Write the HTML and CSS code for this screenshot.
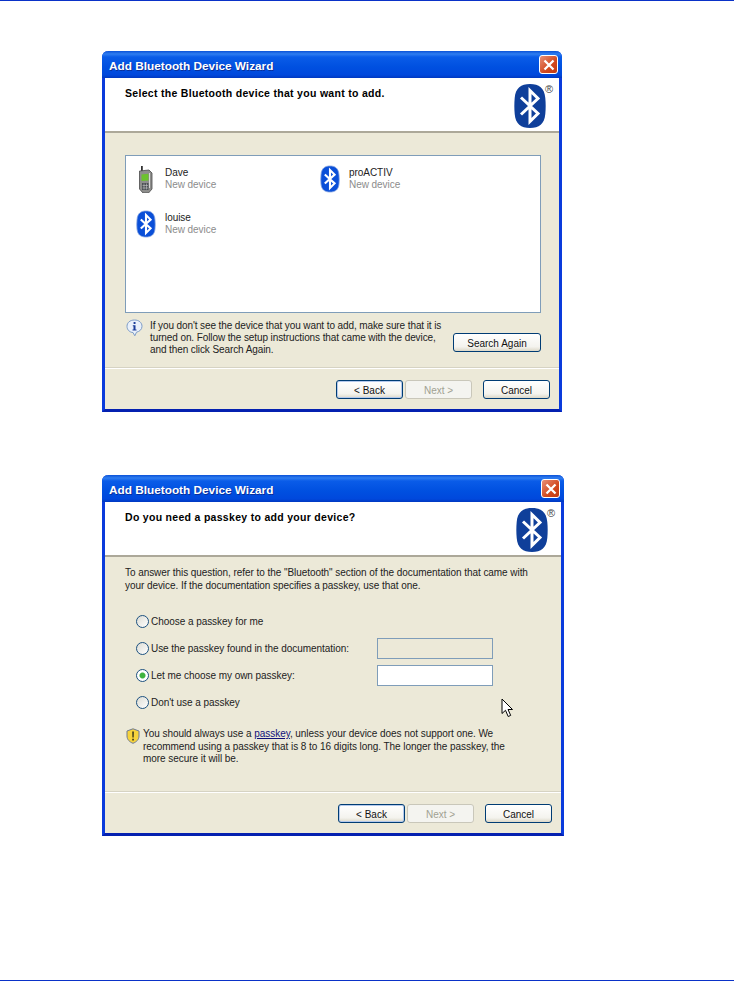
FILE: index.html
```html
<!DOCTYPE html>
<html lang="en">
  <head>
    <meta charset="UTF-8" />
    <meta name="viewport" content="width=device-width, initial-scale=1.0" />
    <title>Add Bluetooth Device Wizard</title>
    <link rel="stylesheet" href="styles.css">
  </head>
  <body>
    <svg class="defs" width="0" height="0">
      <symbol id="bt-small" viewBox="0 0 20 28">
        <path d="M10 1C5 1 1.500 3 1 10C.7 13 .7 16 1 19C1.600 25 5 27 10 27C15 27 18.400 25 19 19C19.300 16 19.300 13 19 10C18.500 3 15 1 10 1Z" fill="#0a4fd8" stroke="#7fa0e0" stroke-width=".8"/>
        <path d="M4.800 9.500L14.600 18.400L10 23V5L14.600 9.600L4.800 18.500" fill="none" stroke="#fff" stroke-width="2.100"/>
      </symbol>
      <symbol id="bt-large" viewBox="0 0 32 44">
        <path d="M16 0C7 0 1.500 4 .7 14C.2 19 .2 25 .7 30C1.500 40 7 44 16 44C25 44 30.500 40 31.300 30C31.800 25 31.800 19 31.300 14C30.500 4 25 0 16 0Z" fill="#0f3f9a"/>
        <path d="M7 13.500L24 29.500L16 37.500V6.500L24 14.500L7 30.500" fill="none" stroke="#fff" stroke-width="3"/>
      </symbol>
    </svg>

    <div class="page">
      <div class="dialog dialog-first">
        <div class="titlebar">
          <span class="title-text">Add Bluetooth Device Wizard</span>
          <button class="close-btn" type="button">
            <svg width="12" height="12" viewBox="0 0 12 12"><path d="M1.500 1.500L10.500 10.500M10.500 1.500L1.500 10.500" stroke="#fff" stroke-width="2.300"/></svg>
          </button>
        </div>
        <div class="wizard-head">
          <h2>Select the Bluetooth device that you want to add.</h2>
          <div class="logo">
            <svg width="32" height="44"><use href="#bt-large"/></svg>
            <span class="reg">®</span>
          </div>
        </div>
        <div class="wizard-body">
          <div class="device-list">
            <div class="device">
              <svg class="device-icon" width="20" height="28" viewBox="0 0 20 28">
                <path d="M5 1h1.800v5H5z" fill="#333"/>
                <path d="M3.500 6L13 5L16 8V24L12.500 28H7L3.500 24Z" fill="#8e8e8c" stroke="#4a4a4a" stroke-width=".8"/>
                <path d="M5.500 9.500L12.500 8.800V15.500L5.500 16Z" fill="#6cc22e"/>
                <path d="M6 18h6.500v7H6z" fill="#4c5054"/>
                <path d="M8 18.500v6M10.500 18.500v6M6.500 20.500h5.500M6.500 23h5.500" stroke="#c4c4c4" stroke-width=".6"/>
                <path d="M13.500 8v15" stroke="#d8d8d8"/>
              </svg>
              <div class="device-text"><div>Dave</div><div class="device-status">New device</div></div>
            </div>
            <div class="device">
              <svg class="device-icon" width="20" height="28"><use href="#bt-small"/></svg>
              <div class="device-text"><div>proACTIV</div><div class="device-status">New device</div></div>
            </div>
            <div class="device">
              <svg class="device-icon" width="20" height="28"><use href="#bt-small"/></svg>
              <div class="device-text"><div>louise</div><div class="device-status">New device</div></div>
            </div>
          </div>
          <div class="hint">
            <svg class="info-icon" width="17" height="18" viewBox="0 0 17 18">
              <path d="M8.500 1C4 1 1 3.700 1 7.300C1 11 4 13.500 7 13.500L8.800 16.800L10.500 13.200C13.500 12.500 16 10.500 16 7.300C16 3.700 13 1 8.500 1Z" fill="#eaf1fb" stroke="#7d9cc8"/>
              <path d="M7.600 3h1.900v1.900H7.600zM6.800 6.200h2.700v4.300h1v1H6.500v-1h1v-3.300h-.7z" fill="#1d3f9a"/>
            </svg>
            <p class="hint-text">If you don't see the device that you want to add, make sure that it is<br>turned on. Follow the setup instructions that came with the device,<br>and then click Search Again.</p>
            <button class="xp-btn search-btn" type="button">Search Again</button>
          </div>
        </div>
        <div class="wizard-foot">
          <button class="xp-btn btn-default" type="button">&lt; Back</button>
          <button class="xp-btn" type="button" disabled>Next &gt;</button>
          <button class="xp-btn btn-cancel" type="button">Cancel</button>
        </div>
      </div>

      <div class="dialog dialog-second">
        <div class="titlebar">
          <span class="title-text">Add Bluetooth Device Wizard</span>
          <button class="close-btn" type="button">
            <svg width="12" height="12" viewBox="0 0 12 12"><path d="M1.500 1.500L10.500 10.500M10.500 1.500L1.500 10.500" stroke="#fff" stroke-width="2.300"/></svg>
          </button>
        </div>
        <div class="wizard-head">
          <h2>Do you need a passkey to add your device?</h2>
          <div class="logo">
            <svg width="32" height="44"><use href="#bt-large"/></svg>
            <span class="reg">®</span>
          </div>
        </div>
        <div class="wizard-body passkey-body">
          <p class="intro">To answer this question, refer to the "Bluetooth" section of the documentation that came with<br>your device. If the documentation specifies a passkey, use that one.</p>
          <div class="options">
            <label class="option"><input type="radio" name="pk" />Choose a passkey for me</label>
            <label class="option"><input type="radio" name="pk" /><span class="option-label">Use the passkey found in the documentation:</span><span class="field field-off"></span></label>
            <label class="option"><input type="radio" name="pk" checked /><span class="option-label">Let me choose my own passkey:</span><span class="field"></span></label>
            <label class="option"><input type="radio" name="pk" />Don't use a passkey</label>
          </div>
          <div class="warning">
            <svg class="shield-icon" width="14" height="16" viewBox="0 0 14 16">
              <path d="M7 .8L13 3V8C13 11.500 10.500 14 7 15.300C3.500 14 1 11.500 1 8V3Z" fill="#f6d33c" stroke="#6e7a96"/>
              <path d="M6.200 3.500h1.700l-.2 6H6.400zM6.200 10.800h1.700v1.700H6.200z" fill="#3c3a1c"/>
            </svg>
            <p>You should always use a <a href="#">passkey</a>, unless your device does not support one. We<br>recommend using a passkey that is 8 to 16 digits long. The longer the passkey, the<br>more secure it will be.</p>
          </div>
        </div>
        <div class="wizard-foot">
          <button class="xp-btn btn-default" type="button">&lt; Back</button>
          <button class="xp-btn" type="button" disabled>Next &gt;</button>
          <button class="xp-btn btn-cancel" type="button">Cancel</button>
        </div>
        <svg class="cursor" width="13" height="20" viewBox="0 0 13 20">
          <path d="M1 1V15.500L4.500 12.300L7.200 18.500L9.700 17.400L7 11.500H11.500Z" fill="#fff" stroke="#000"/>
        </svg>
      </div>
    </div>
  </body>
</html>
```

FILE: styles.css
```css
body {
  margin: 0;
  background: #fff;
  font-family: "Liberation Sans", Arial, sans-serif;
  font-size: 10px;
  letter-spacing: -.05px;
  color: #222;
}

.defs {
  display: block;
}

.page {
  box-sizing: border-box;
  height: 981px;
  padding: 50px 0 0 102px;
  border-top: 1px solid #0a32c8;
  border-bottom: 1px solid #0a32c8;
}

.dialog {
  position: relative;
  box-sizing: border-box;
  display: flex;
  flex-direction: column;
  width: 460px;
  height: 361px;
  background: #ece9d8;
  border: solid #0a3bdc;
  border-width: 0 3px 3px;
  border-bottom-color: #0420b0;
  border-radius: 6px 6px 0 0;
}

.dialog-second {
  width: 462px;
  margin-top: 63px;
}

.titlebar {
  display: flex;
  align-items: center;
  justify-content: space-between;
  flex: none;
  height: 27px;
  margin: 0 -3px;
  padding: 0 4px 0 7px;
  background: linear-gradient(to bottom, #0a52d8 0, #2f7df0 3px, #0a5ce8 6px, #0050e0 16px, #0048dc 24px, #0038c0 27px);
  border-radius: 6px 6px 0 0;
}

.title-text {
  padding-top: 3px;
  color: #fff;
  font-size: 11.800px;
  font-weight: bold;
  letter-spacing: 0;
  text-shadow: 1px 1px 0 #0a2f9a;
}

.close-btn {
  display: flex;
  align-items: center;
  justify-content: center;
  box-sizing: border-box;
  width: 19px;
  height: 19px;
  padding: 0;
  background: linear-gradient(135deg, #e89078, #d2491f 60%, #c23a12);
  border: 1px solid #fff;
  border-radius: 3px;
}

.wizard-head {
  display: flex;
  justify-content: space-between;
  flex: none;
  box-sizing: border-box;
  height: 55px;
  padding: 6px 4px 0 20px;
  background: #fff;
  border-bottom: 2px solid #aca899;
}

.wizard-head h2 {
  margin: 3px 0 0;
  color: #000;
  font-size: 10.500px;
  font-weight: bold;
  letter-spacing: .3px;
}

.logo {
  display: flex;
  align-items: flex-start;
  width: 41px;
}

.reg {
  margin-left: -1px;
  font-size: 11px;
  line-height: 10px;
  color: #444;
}

.wizard-body {
  flex: 1;
  padding: 22px 18px 0 20px;
}

.device-list {
  display: grid;
  grid-template-columns: 184px 184px;
  grid-auto-rows: 45px;
  box-sizing: border-box;
  height: 158px;
  padding: 9px 0 0 10px;
  background: #fff;
  border: 1px solid #7f9db9;
}

.device {
  display: flex;
  gap: 9px;
}

.device-icon {
  flex: none;
}

.device-text {
  padding-top: 2px;
  line-height: 12px;
}

.device-status {
  color: #8c8c8c;
}

.hint {
  display: flex;
  align-items: flex-start;
  margin-top: 6px;
}

.info-icon {
  flex: none;
  margin: 0 7px 0 1px;
}

.hint-text {
  flex: 1;
  margin: 0;
  padding-top: 1px;
  line-height: 12px;
  letter-spacing: -.1px;
}

.xp-btn {
  flex: none;
  box-sizing: border-box;
  width: 67px;
  height: 19px;
  padding: 1px 0 0;
  font-family: inherit;
  font-size: 10px;
  color: #111;
  background: linear-gradient(to bottom, #fff, #f4f3ee 75%, #dcd8c8);
  border: 1px solid #003c74;
  border-radius: 3px;
}

.xp-btn:disabled {
  color: #a1a192;
  background: #f4f4f0;
  border-color: #c9c7ba;
}

.search-btn {
  width: 88px;
  margin-top: 14px;
}

.btn-default {
  box-shadow: inset 0 0 0 1px #b4c9ec;
}

.btn-cancel {
  margin-left: 9px;
}

.wizard-foot {
  display: flex;
  justify-content: flex-end;
  gap: 2px;
  flex: none;
  box-sizing: border-box;
  height: 42px;
  padding: 12px 9px 0 0;
  border-top: 1px solid #d6d3c3;
  box-shadow: inset 0 1px 0 #fff;
}

.passkey-body {
  padding: 10px 0 0 20px;
}

.intro {
  margin: 0;
  line-height: 12.500px;
  letter-spacing: -.06px;
}

.options {
  display: flex;
  flex-direction: column;
  margin: 16px 0 0 11px;
}

.option {
  display: flex;
  align-items: center;
  height: 27px;
}

.option input {
  flex: none;
  appearance: none;
  box-sizing: border-box;
  width: 13px;
  height: 13px;
  margin: 0 2px 0 0;
  background: linear-gradient(135deg, #dcdcd4, #fff);
  border: 1px solid #1c5180;
  border-radius: 50%;
}

.option input:checked {
  background: radial-gradient(circle, #3fb33f 0, #3fb33f 2.500px, #fff 3.500px);
}

.option-label {
  width: 226px;
}

.field {
  box-sizing: border-box;
  width: 116px;
  height: 21px;
  background: #fff;
  border: 1px solid #7f9db9;
}

.field-off {
  background: #ece9d8;
}

.warning {
  display: flex;
  align-items: flex-start;
  margin: 12px 0 0 1px;
}

.shield-icon {
  flex: none;
  margin-right: 3px;
}

.warning p {
  margin: 0;
  line-height: 12.700px;
}

.warning a {
  color: #10107a;
}

.cursor {
  position: absolute;
  left: 396px;
  top: 223px;
}
```
